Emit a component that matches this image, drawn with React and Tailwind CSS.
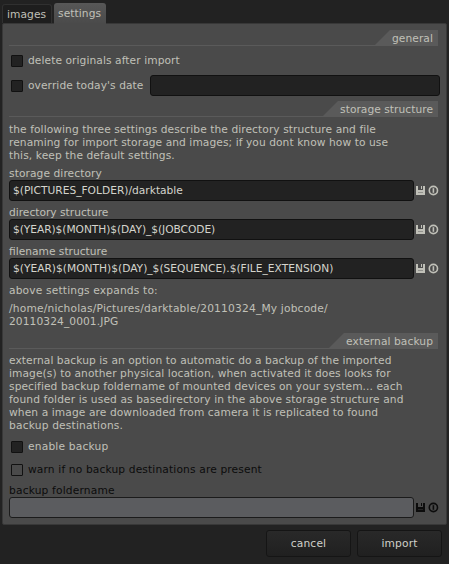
function SectionHeader({ title, width, tracking = "tracking-[0.08px]" }) {
  return (
    <div className="flex h-4 shrink-0 items-end">
      <div className="h-px flex-1 bg-[#5a5a5a]" />
      <div className="relative h-4" style={{ width }}>
        <svg className="absolute inset-0 h-4 w-full" viewBox={`0 0 ${width} 16`}>
          <polygon points={`0,16 0,15 15,0 ${width},0 ${width},16`} fill="#5a5a5a" />
        </svg>
        <div className={`relative pr-[5px] text-right leading-[17px] whitespace-nowrap ${tracking}`}>{title}</div>
      </div>
      <div className="w-[2px]" />
    </div>
  );
}

function Check({ label, disabled, tracking = "" }) {
  return (
    <div className={`flex items-center pl-[2px] ${disabled ? "text-[#0c0c0c]" : ""}`}>
      <div
        className={`mr-[5px] size-3 rounded-[1px] border border-[#111] ${disabled ? "bg-[#4a4a4a]" : "bg-[#222]"}`}
      />
      <span className={`leading-[13px] whitespace-nowrap ${tracking}`}>{label}</span>
    </div>
  );
}

function FieldIcons({ color }) {
  return (
    <svg className="ml-[2px] h-[11px] w-[24px]" viewBox="0 0 24 11" fill="none">
      <path d="M0 1h2v4h5V1h2v9H0z" fill={color} />
      <path d="M5 1h1v3H5z" fill={color} />
      <path d="M2 7.5h5" stroke="#4a4a4a" strokeWidth="1" opacity="0.4" />
      <circle cx="17.4" cy="5.5" r="4.1" stroke={color} strokeWidth="1.6" />
      <path d="M17.4 3.2v4.6" stroke={color} strokeWidth="1.6" />
    </svg>
  );
}

function Field({ label, value, disabled, tracking = "", valueTracking = "tracking-[0px]" }) {
  return (
    <div className={disabled ? "text-[#0c0c0c]" : ""}>
      <div className={`h-[13px] leading-[13px] ${tracking}`}>{label}</div>
      <div className="flex items-center">
        <div
          className={`h-[21px] w-[405px] rounded-[3px] border px-[3px] leading-[19px] whitespace-nowrap ${valueTracking} ${disabled ? "border-[#1b1b1b] bg-[#5b5c5f]" : "border-[#111] bg-[#222] text-[#d4d4cc]"}`}
        >
          {value}
        </div>
        <FieldIcons color={disabled ? "#0c0c0c" : "#c0c0b8"} />
      </div>
    </div>
  );
}

function Lines({ lines }) {
  return (
    <div>
      {lines.map(([text, tracking]) => (
        <div key={text} className={`h-[13px] leading-[13px] whitespace-nowrap ${tracking}`}>{text}</div>
      ))}
    </div>
  );
}

function Button({ children }) {
  return (
    <div className="h-[27px] w-[85px] rounded-[3px] border border-[#151515] bg-linear-to-b from-[#292929] to-[#202020] text-center leading-[25px] tracking-[0.15px] text-[#d0d0ca]">
      {children}
    </div>
  );
}

export default function App() {
  return (
    <div className="flex h-[564px] w-[449px] flex-col overflow-hidden bg-[#222] font-['DejaVu_Sans',sans-serif] text-[10.67px] tracking-[0.08px] text-[#c0c0b8]">
      <div className="flex h-[23px] shrink-0 items-end pl-[2px]">
        <div className="h-[19px] w-[50px] rounded-t-[3px] border border-b-0 border-[#303030] bg-[#1e1e1e] pl-[4px] leading-[19px]">images</div>
        <div className="relative -mb-px ml-[2px] h-[21px] w-[52px] rounded-t-[3px] bg-linear-to-b from-[#575757] to-[#4a4a4a] pl-[4px] leading-[21px]">settings</div>
      </div>
      <div className="ml-[2px] flex h-[502px] w-[445px] shrink-0 flex-col rounded-[2px] border border-[#383838] bg-[#4a4a4a] pt-[6px] pl-[6px]">
        <div className="flex w-[431px] flex-col">
          <SectionHeader title="general" width={63} />
          <div className="mt-1 flex h-[21px] items-center">
            <Check label="delete originals after import" />
          </div>
          <div className="mt-1 flex h-[21px] items-center justify-between">
            <Check label="override today's date" />
            <div className="h-[21px] w-[290px] rounded-[3px] border border-[#111] bg-[#222]" />
          </div>
          <div className="h-[5px]" />
          <SectionHeader title="storage structure" width={115} tracking="tracking-[0.04px]" />
          <div className="mt-[6px] mb-[5px]">
            <Lines
              lines={[
                ["the following three settings describe the directory structure and file", "tracking-[0.074px]"],
                ["renaming for import storage and images; if you dont know how to use", "tracking-[0.069px]"],
                ["this, keep the default settings.", "tracking-[0.09px]"],
              ]}
            />
          </div>
          <div className="flex flex-col gap-[5px]">
            <Field label="storage directory" value="$(PICTURES_FOLDER)/darktable" />
            <Field
              label="directory structure"
              value="$(YEAR)$(MONTH)$(DAY)_$(JOBCODE)"
              tracking="tracking-[0px]"
              valueTracking="tracking-[-0.06px]"
            />
            <Field label="filename structure" value="$(YEAR)$(MONTH)$(DAY)_$(SEQUENCE).$(FILE_EXTENSION)" tracking="tracking-[0px]" />
            <Lines lines={[["above settings expands to:", "tracking-[0.16px]"]]} />
            <Lines
              lines={[
                ["/home/nicholas/Pictures/darktable/20110324_My jobcode/", "tracking-[0.18px]"],
                ["20110324_0001.JPG", "tracking-[0.08px]"],
              ]}
            />
            <SectionHeader title="external backup" width={109} />
            <Lines
              lines={[
                ["external backup is an option to automatic do a backup of the imported", "tracking-[0.071px]"],
                ["image(s) to another physical location, when activated it does looks for", "tracking-[0.076px]"],
                ["specified backup foldername of mounted devices on your system... each", "tracking-[0.079px]"],
                ["found folder is used as basedirectory in the above storage structure and", "tracking-[0.107px]"],
                ["when a image are downloaded from camera it is replicated to found", "tracking-[0.095px]"],
                ["backup destinations.", "tracking-[0.18px]"],
              ]}
            />
          </div>
          <div className="mt-[4px] flex h-[21px] items-center">
            <Check label="enable backup" tracking="tracking-[0.18px]" />
          </div>
          <div className="mt-[2px] mb-[4px] flex h-[21px] items-center">
            <Check label="warn if no backup destinations are present" disabled tracking="tracking-[0.14px]" />
          </div>
          <Field label="backup foldername" value="" disabled tracking="tracking-[0.17px]" />
        </div>
      </div>
      <div className="mt-[5px] flex justify-end gap-[6px] pr-[7px]">
        <Button>cancel</Button>
        <Button>import</Button>
      </div>
    </div>
  );
}
